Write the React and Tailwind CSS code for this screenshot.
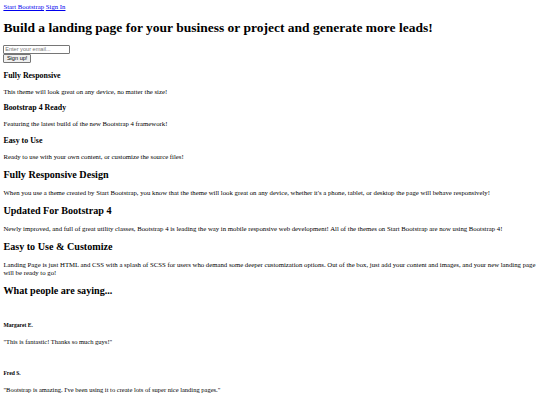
export default function App() {
  const features = [
    ["Fully Responsive", "This theme will look great on any device, no matter the size!"],
    ["Bootstrap 4 Ready", "Featuring the latest build of the new Bootstrap 4 framework!"],
    ["Easy to Use", "Ready to use with your own content, or customize the source files!"],
  ];
  const showcase = [
    ["Fully Responsive Design", "When you use a theme created by Start Bootstrap, you know that the theme will look great on any device, whether it's a phone, tablet, or desktop the page will behave responsively!"],
    ["Updated For Bootstrap 4", "Newly improved, and full of great utility classes, Bootstrap 4 is leading the way in mobile responsive web development! All of the themes on Start Bootstrap are now using Bootstrap 4!"],
    ["Easy to Use & Customize", "Landing Page is just HTML and CSS with a splash of SCSS for users who demand some deeper customization options. Out of the box, just add your content and images, and your new landing page will be ready to go!"],
  ];
  const testimonials = [
    ["Margaret E.", "\"This is fantastic! Thanks so much guys!\""],
    ["Fred S.", "\"Bootstrap is amazing. I've been using it to create lots of super nice landing pages.\""],
  ];
  return (
    <div className="m-[3.4px] font-['Liberation_Serif',serif] text-[6.75px] leading-[1.15] text-black bg-white">
      <nav>
        <a href="#" className="text-[#0000EE] underline">Start Bootstrap</a>{" "}
        <a href="#" className="text-[#0000EE] underline">Sign In</a>
      </nav>
      <header>
        <h1 className="text-[13.5px] font-bold my-[9.05px]">
          Build a landing page for your business or project and generate more leads!
        </h1>
        <form onSubmit={(e) => e.preventDefault()}>
          <div className="flex">
            <input
              type="email"
              placeholder="Enter your email..."
              className="w-[67px] h-[9px] px-[0.8px] font-['Liberation_Sans',sans-serif] text-[5.6px] border-[0.8px] border-[#767676] rounded-[1px] bg-white placeholder:text-[#757575] outline-none"
            />
          </div>
          <div className="flex">
            <button
              type="submit"
              className="h-[9px] px-[2.5px] font-['Liberation_Sans',sans-serif] text-[5.6px] text-black bg-[#efefef] border-[0.8px] border-[#767676] rounded-[1px]"
            >
              Sign up!
            </button>
          </div>
        </form>
      </header>
      <section>
        {features.map(([t, d]) => (
          <div key={t}>
            <h3 className="text-[7.9px] font-bold my-[7.9px]">{t}</h3>
            <p className="my-[6.75px]">{d}</p>
          </div>
        ))}
      </section>
      <section>
        {showcase.map(([t, d]) => (
          <div key={t}>
            <h2 className="text-[10.13px] font-bold my-[8.4px]">{t}</h2>
            <p className="my-[6.75px]">{d}</p>
          </div>
        ))}
      </section>
      <section>
        <h2 className="text-[10.13px] font-bold my-[8.4px]">What people are saying...</h2>
        {testimonials.map(([n, q]) => (
          <div key={n}>
            <div className="h-[7.76px]"></div>
            <h5 className="text-[5.6px] font-bold my-[9.36px]">{n}</h5>
            <p className="my-[6.75px] text-[6.5px] leading-[7.76px]">{q}</p>
          </div>
        ))}
      </section>
    </div>
  );
}
